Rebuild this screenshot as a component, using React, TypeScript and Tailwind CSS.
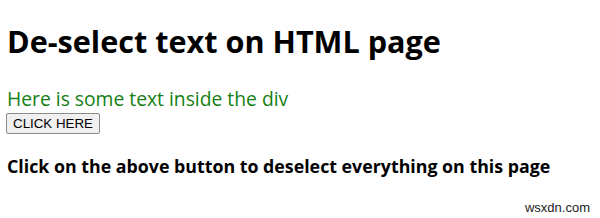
export default function App() {
  return (
    <div className="relative h-[218px] w-[600px] overflow-hidden bg-white px-[7px] pt-[26px] font-['Open_Sans',sans-serif] text-black">
      <h1 className="text-[30.6px] font-bold leading-[31px]">De-select text on HTML page</h1>
      <div className="mt-[31px] text-[19.3px] leading-[22px] text-[#148014]">Here is some text inside the div</div>
      <button className="-ml-px mt-[2px] rounded-[2px] border border-[#8a8a8a] bg-[#f0f0f0] px-[6px] py-[2px] font-['Liberation_Sans',sans-serif] text-[13.33px] leading-[15px] text-black">
        CLICK HERE
      </button>
      <h3 className="mt-[22px] text-[17.8px] font-bold leading-[21px]">
        Click on the above button to deselect everything on this page
      </h3>
      <span className="absolute bottom-[3px] right-[10px] font-['Liberation_Sans',sans-serif] text-[13px] leading-[15px] text-[#222]">wsxdn.com</span>
    </div>
  );
}
